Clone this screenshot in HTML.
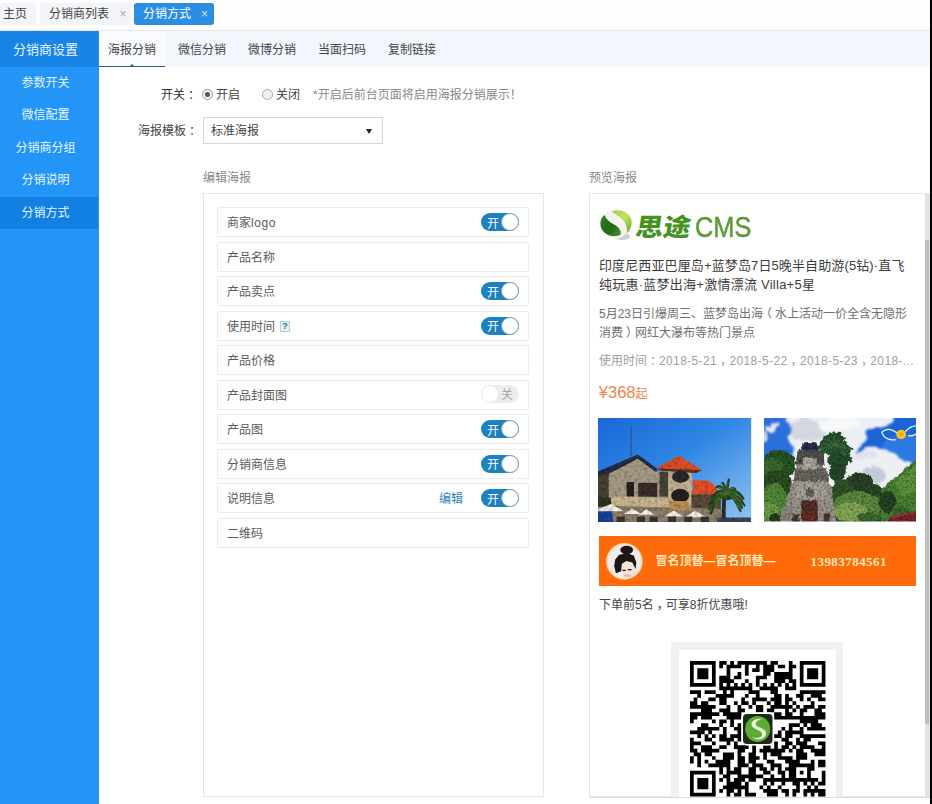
<!DOCTYPE html><html lang="zh-CN"><head><meta charset="utf-8"><title>分销方式</title><style>
*{margin:0;padding:0;box-sizing:border-box}
html,body{width:932px;height:804px;overflow:hidden;background:#fff}
body{font-family:"Liberation Sans","Noto Sans CJK SC",sans-serif;font-size:12px;color:#444;position:relative}
.a{position:absolute;white-space:nowrap}
.p{position:relative;left:3px}
.pl{position:relative;left:-3px}
.bd{font-family:'Liberation Sans','Noto Sans CJK SC',sans-serif;font-weight:bold}
.bk{font-family:'Liberation Sans','Noto Sans CJK SC',sans-serif;font-weight:900}
.t{position:absolute;white-space:nowrap;line-height:20px;height:20px}
#topbar{left:0;top:0;width:930px;height:30px;background:#fdfdfe}
#topline{left:0;top:30px;width:930px;height:1px;background:#e3e6ec}
.tab{top:3px;height:22px;line-height:22px;border-radius:3px;background:#f3f4f8;color:#444;font-size:12px}
.tab.on{background:#2b8ee3;color:#fff}
.tab i{font-style:normal;position:absolute;top:0;color:#aaa;font-size:12px}
.tab.on i{color:#cfe6fb}
#side{left:0;top:31px;width:99px;height:773px;background:#2395f6;border-right:1px solid #3d8fd6}
#side .hd{left:0;top:0;width:98px;padding-left:1px;height:35.5px;background:#1884e6;color:#e6f5ff;font-size:13px;line-height:37px;text-align:center;padding-right:8px}
#side .it{left:0;width:98px;padding-left:1px;height:32.5px;line-height:33px;color:#e6f5ff;text-align:center;font-size:12px;padding-right:8px}
#side .it.on{background:#1180e2}
#sub{left:99px;top:31px;width:831px;height:36px;background:#f2f6fd}
#sub .s{top:0;height:36px;line-height:38px;font-size:12px;color:#444}
#sub .s.on{background:#f9fbff;border-bottom:1px solid #2b5f80}
.rail{left:930.2px;top:0;width:2px;height:804px;background:#000}
.panel{border:1px solid #e6e6e6;background:#fff}
.row{left:217px;width:312px;height:30px;border:1px solid #ebebef;border-radius:2px;background:#fff}
.row .l{left:9px;top:5px;line-height:20px;color:#5a5a5a;font-size:12px}
.tg{left:263px;top:5px;width:38px;height:18px;border-radius:9px;background:#1c82bf}
.tg b{position:absolute;left:6px;top:0.5px;line-height:20px;font-weight:normal;color:#fff;font-size:12px}
.tg u{position:absolute;right:0;top:0;width:18px;height:18px;border-radius:9px;background:#fff;border:1px solid #8aa;}
.tg.off{background:#ececec;top:4px}
.tg.off b{left:auto;right:6px;color:#aaa}
.tg.off u{right:auto;left:0;border-color:#e8e8e8}
</style></head><body>
<div class="a" id="topbar"></div><div class="a" id="topline"></div>
<div class="a tab" style="left:0;width:36px;padding-left:3px">主页</div>
<div class="a tab" style="left:40px;width:91px;padding-left:9px">分销商列表<i style="left:79.5px">×</i></div>
<div class="a tab on" style="left:134px;width:80px;padding-left:9px">分销方式<i style="left:67px">×</i></div>
<div class="a" id="side"><div class="a hd">分销商设置</div>
<div class="a it" style="top:35.6px">参数开关</div>
<div class="a it" style="top:68.1px">微信配置</div>
<div class="a it" style="top:100.6px">分销商分组</div>
<div class="a it" style="top:133.1px">分销说明</div>
<div class="a it on" style="top:165.6px">分销方式</div>
</div>
<div class="a" id="sub">
<div class="a s on" style="left:0;width:66px;text-align:center">海报分销<span class="a" style="left:29.5px;top:32.5px;width:0;height:0;border-left:3px solid transparent;border-right:3px solid transparent;border-bottom:3px solid #2b5f80"></span></div>
<div class="a s" style="left:79px">微信分销</div>
<div class="a s" style="left:149px">微博分销</div>
<div class="a s" style="left:219px">当面扫码</div>
<div class="a s" style="left:289px">复制链接</div>
</div>
<div class="t" style="left:161px;top:85px;color:#333">开关<span class="p">：</span></div>
<div class="a" style="left:202px;top:89px;width:11px;height:11px;border-radius:50%;border:1px solid #999;background:#f4f4f4"><span class="a" style="left:2px;top:2px;width:5px;height:5px;border-radius:50%;background:#555"></span></div>
<div class="t" style="left:216px;top:85px">开启</div>
<div class="a" style="left:262px;top:89px;width:11px;height:11px;border-radius:50%;border:1px solid #aaa;background:#f0f0f0"></div>
<div class="t" style="left:276px;top:85px">关闭</div>
<div class="t" style="left:313px;top:85px;color:#888">*开启后前台页面将启用海报分销展示！</div>
<div class="t" style="left:138px;top:121px">海报模板<span class="p">：</span></div>
<div class="a" style="left:203px;top:117px;width:180px;height:27px;border:1px solid #d5d5d5;background:#fff"><span class="t" style="left:7px;top:3px">标准海报</span><span class="a" style="left:162px;top:11px;width:0;height:0;border-left:3px solid transparent;border-right:3px solid transparent;border-top:5px solid #222"></span></div>
<div class="t" style="left:203px;top:168px;color:#888">编辑海报</div>
<div class="a panel" style="left:203px;top:193px;width:341px;height:604px"></div>
<div class="a row" style="top:207.4px"><span class="a l">商家<span style="letter-spacing:0.6px">logo</span></span><span class="a tg"><b>开</b><u></u></span></div>
<div class="a row" style="top:241.9px"><span class="a l">产品名称</span></div>
<div class="a row" style="top:276.4px"><span class="a l">产品卖点</span><span class="a tg"><b>开</b><u></u></span></div>
<div class="a row" style="top:310.9px"><span class="a l">使用时间</span><span class="a" style="left:62px;top:9px;width:10px;height:11px;border:1px solid #b5cfdc;background:#e6f1f6;font-size:9px;line-height:9px;text-align:center;color:#2f6f8f;font-weight:bold">?</span><span class="a tg"><b>开</b><u></u></span></div>
<div class="a row" style="top:345.4px"><span class="a l">产品价格</span></div>
<div class="a row" style="top:379.9px"><span class="a l">产品封面图</span><span class="a tg off"><b>关</b><u></u></span></div>
<div class="a row" style="top:414.4px"><span class="a l">产品图</span><span class="a tg"><b>开</b><u></u></span></div>
<div class="a row" style="top:448.9px"><span class="a l">分销商信息</span><span class="a tg"><b>开</b><u></u></span></div>
<div class="a row" style="top:483.4px"><span class="a l">说明信息</span><span class="a" style="left:221px;top:5px;line-height:20px;color:#2a7fb8">编辑</span><span class="a tg"><b>开</b><u></u></span></div>
<div class="a row" style="top:517.9px"><span class="a l">二维码</span></div>
<div class="t" style="left:589px;top:168px;color:#888">预览海报</div>
<div class="a panel" style="left:589px;top:193px;width:341px;height:604px;overflow:hidden" id="pv"></div>
<svg class="a" style="left:597px;top:207px" width="38" height="38" viewBox="0 0 38 38"><defs><linearGradient id="lg1" x1="0" y1="0" x2="1" y2="1"><stop offset="0" stop-color="#2f7f22"/><stop offset="0.6" stop-color="#1f6a1a"/><stop offset="1" stop-color="#4d9a30"/></linearGradient><linearGradient id="lg2" x1="0" y1="0" x2="1" y2="1"><stop offset="0" stop-color="#a9d24a"/><stop offset="0.5" stop-color="#c4e060"/><stop offset="1" stop-color="#5da02c"/></linearGradient><filter id="lb" x="-20%" y="-20%" width="140%" height="140%"><feGaussianBlur stdDeviation="0.55"/></filter></defs><g filter="url(#lb)"><ellipse cx="25" cy="29.5" rx="8" ry="3.6" fill="#cfcfcf"/><path d="M6 9 C9 4 17 2 23 5 C29 8 33 14 31 22 C29 29 22 33 16 31 C9 29 3 22 4 15 C4.3 12.5 5 10.5 6 9z" fill="#f3f4f1"/><path d="M7.5 8 C2 12 1.8 21 8 26 C12.5 29.5 19 30 23.5 28 C25 24.5 22 20 17 17.5 C12 15 9 12 7.5 8z" fill="url(#lg1)"/><path d="M14.5 4.6 C20 2 28 3 32 8 C36 13 35.5 21 30 26.5 C30.5 20 28.5 15 24.5 11.5 C21.5 9 18 7 14.5 4.6z" fill="url(#lg2)"/></g></svg>
<div class="a bk" style="left:632.6px;top:206px;height:40px;line-height:40px;font-size:27.5px;color:#45931f;transform:skewX(-9deg) scaleY(0.9);transform-origin:0 100%" id="lt1">思途</div>
<div class="a" style="left:694.5px;top:206.5px;height:40px;line-height:40px;font-size:30px;color:#5b9a3a;-webkit-text-stroke:0.5px #5b9a3a;transform:scaleX(0.845);transform-origin:0 50%" id="lt2">CMS</div>
<div class="t" style="left:599px;top:255.6px;font-size:13px;color:#3c3c3c;letter-spacing:0.12px" id="t1">印度尼西亚巴厘岛+蓝梦岛7日5晚半自助游(5钻)·直飞</div>
<div class="t" style="left:599px;top:275px;font-size:13px;color:#3c3c3c;letter-spacing:0.25px" id="t2">纯玩惠·蓝梦出海+激情漂流 Villa+5星</div>
<div class="t" style="left:599px;top:304px;color:#707070" id="t3">5月23日引爆周三、蓝梦岛出海<span class="pl">（</span>水上活动一价全含无隐形</div>
<div class="t" style="left:599px;top:323px;color:#707070" id="t4">消费<span class="p">）</span>网红大瀑布等热门景点</div>
<div class="t" style="left:599px;top:351px;color:#a0a0a0" id="t5">使用时间<span class="p">：</span><span style="letter-spacing:0.37px">2018-5-21<span class="p">，</span>2018-5-22<span class="p">，</span>2018-5-23<span class="p">，</span>2018-...</span></div>
<div class="t" style="left:598.8px;top:381.5px;color:#f2814c;font-size:16.5px" id="t6">¥368<span style="font-size:12px">起</span></div>
<svg class="a" style="left:598.4px;top:418px" width="153.2" height="103.6" viewBox="0 0 153 103.5" preserveAspectRatio="none"><defs><linearGradient id="sk1" x1="0" y1="0" x2="1" y2="1"><stop offset="0" stop-color="#1868d6"/><stop offset="0.45" stop-color="#2f86e4"/><stop offset="1" stop-color="#92c4f0"/></linearGradient><filter id="b1" filterUnits="userSpaceOnUse" x="-10" y="-10" width="173" height="124"><feTurbulence type="fractalNoise" baseFrequency="0.3" numOctaves="2" seed="5" result="n"/><feDisplacementMap in="SourceGraphic" in2="n" scale="1.6" xChannelSelector="R" yChannelSelector="G" result="d"/><feGaussianBlur in="d" stdDeviation="0.45" result="bl"/><feColorMatrix in="n" type="matrix" values="0 0 0 0 0  0 0 0 0 0  0 0 0 0 0  1.2 0 0 0 -0.5" result="m"/><feComposite in="m" in2="bl" operator="in" result="sh"/><feMerge><feMergeNode in="bl"/><feMergeNode in="sh"/></feMerge></filter></defs><rect width="153" height="103.5" fill="url(#sk1)"/><g filter="url(#b1)"><polygon points="32.5,9.1 33.9,9.1 33.6,38.3 32.1,38.3" fill="#3b5f9a"/><polygon points="-5.1,72.1 122.6,72.1 122.6,110.4 -5.1,110.4" fill="#7f7562"/><polygon points="-5.1,68.4 11.3,71.2 14.1,90.3 -5.1,90.3" fill="#2f3522"/><polygon points="-5.1,55.7 39.6,36.5 58.8,50.5 58.8,79.4 -5.1,79.4" fill="#2b2e42"/><polygon points="10.4,56.0 39.6,40.7 56.9,53.5 69.7,53.5 69.7,79.4 10.4,79.4" fill="#a59b86"/><polygon points="-5.1,59.7 10.4,55.7 10.4,79.4 -5.1,79.4" fill="#4a4236"/><polygon points="28.6,63.9 35.9,63.9 35.9,78.6 28.6,78.6" fill="#2a2420"/><polygon points="40.1,64.8 59.1,64.8 59.1,78.6 40.1,78.6" fill="#3a2f2a"/><polygon points="61.5,53.8 70.1,53.8 70.1,78.6 61.5,78.6" fill="#4a4238"/><polygon points="70.1,52.0 93.8,52.0 93.8,90.3 70.1,90.3" fill="#c3b190"/><polygon points="57.8,50.5 80.7,37.8 104.0,52.0 98.0,54.9 64.2,52.4" fill="#d9502a"/><polygon points="57.8,50.5 104.0,52.0 98.0,54.9 64.2,52.7" fill="#5a3426"/><ellipse cx="82.5" cy="58.6" rx="8.5" ry="6" fill="#2c2a2e"/><ellipse cx="82.1" cy="77.6" rx="9" ry="7" fill="#2a2422"/><polygon points="94.9,62.0 110.8,62.6 119.0,70.3 117.2,76.1 94.9,76.1" fill="#e2502a"/><polygon points="93.4,76.1 122.6,76.1 122.6,110.4 93.4,110.4" fill="#5b4a3a"/><polygon points="13.1,78.3 70.1,79.7 70.1,89.4 13.1,87.6" fill="#c8b690"/><polygon points="-5.1,88.5 122.6,90.3 122.6,110.4 -5.1,110.4" fill="#8d806c"/><polygon points="71.5,83.0 89.8,83.0 93.4,92.2 71.5,92.2" fill="#b98f52"/><polygon points="124.1,79.4 127.7,79.4 127.2,110.4 123.0,110.4" fill="#2e2a26"/><ellipse cx="128.5" cy="76.1" rx="9" ry="6" fill="#2a4a22"/><path d="M128.5 76.1Q119.7 78.0 112.6 95.4M128.5 76.1Q118.9 74.3 111.1 91.3M128.5 76.1Q118.9 71.5 111.1 86.7M128.5 76.1Q120.4 69.1 113.8 79.5M128.5 76.1Q123.1 65.7 118.8 68.9M128.5 76.1Q126.2 66.1 124.3 64.9M128.5 76.1Q129.7 64.4 130.7 61.6M128.5 76.1Q133.2 67.9 137.0 71.2M128.5 76.1Q137.7 68.5 145.2 80.7M128.5 76.1Q138.1 71.7 146.0 87.3M128.5 76.1Q136.9 74.6 143.7 89.6M128.5 76.1Q136.0 77.7 142.2 92.8" fill="none" stroke="#2b4a22" stroke-width="2.4" stroke-linecap="round"/><path d="M128.5 76.1Q121.9 77.5 116.5 89.5M128.5 76.1Q122.0 74.3 116.8 84.2M128.5 76.1Q122.3 71.8 117.3 79.4M128.5 76.1Q124.5 68.5 121.2 70.4M128.5 76.1Q128.7 67.9 128.9 65.5M128.5 76.1Q132.2 68.7 135.2 70.3M128.5 76.1Q134.2 71.0 138.9 77.4M128.5 76.1Q136.3 73.7 142.8 85.7M128.5 76.1Q135.6 77.1 141.4 89.8" fill="none" stroke="#47702e" stroke-width="1.2" stroke-linecap="round"/><polygon points="119.0,99.5 152.7,99.5 152.7,110.4 119.0,110.4" fill="#3d4655"/><polygon points="-5.1,93.2 12.8,85.8 25.9,93.2" fill="#f3efe6"/><polygon points="25.9,95.8 34.1,90.3 43.2,95.8" fill="#f3efe6"/><polygon points="40.5,96.7 48.2,91.2 56.9,96.7" fill="#f3efe6"/><polygon points="66.1,98.5 75.5,92.5 86.1,98.5" fill="#f3efe6"/><polygon points="87.0,99.1 97.1,92.5 108.0,99.1" fill="#f3efe6"/><polygon points="-5.1,93.6 14.1,93.2 15.9,110.4 -5.1,110.4" fill="#1c3f9c"/><polygon points="18.6,98.5 26.8,98.5 26.8,110.4 18.6,110.4" fill="#3a3430"/><polygon points="38.7,98.5 46.9,98.5 46.9,110.4 38.7,110.4" fill="#3a3430"/><polygon points="51.5,98.5 59.7,98.5 59.7,110.4 51.5,110.4" fill="#3a3430"/><polygon points="69.7,98.5 77.9,98.5 77.9,110.4 69.7,110.4" fill="#3a3430"/><polygon points="86.1,98.5 94.3,98.5 94.3,110.4 86.1,110.4" fill="#3a3430"/><polygon points="102.6,98.5 110.8,98.5 110.8,110.4 102.6,110.4" fill="#3a3430"/></g></svg>
<svg class="a" style="left:763.6px;top:418px" width="152.6" height="103.6" viewBox="0 0 152.6 103.5" preserveAspectRatio="none"><defs><filter id="b2" filterUnits="userSpaceOnUse" x="-10" y="-10" width="173" height="124"><feTurbulence type="fractalNoise" baseFrequency="0.06" numOctaves="3" seed="2" result="n"/><feDisplacementMap in="SourceGraphic" in2="n" scale="14" xChannelSelector="R" yChannelSelector="G" result="d"/><feGaussianBlur in="d" stdDeviation="1.2"/></filter><filter id="b3" filterUnits="userSpaceOnUse" x="-10" y="-10" width="173" height="124"><feTurbulence type="fractalNoise" baseFrequency="0.18" numOctaves="3" seed="4" result="n"/><feDisplacementMap in="SourceGraphic" in2="n" scale="4.5" xChannelSelector="R" yChannelSelector="G" result="d"/><feGaussianBlur in="d" stdDeviation="0.5" result="bl"/><feTurbulence type="fractalNoise" baseFrequency="0.45" numOctaves="2" seed="9" result="n2"/><feColorMatrix in="n2" type="matrix" values="0 0 0 0 0  0 0 0 0 0  0 0 0 0 0  1.6 0 0 0 -0.62" result="m"/><feComposite in="m" in2="bl" operator="in" result="sh"/><feMerge><feMergeNode in="bl"/><feMergeNode in="sh"/></feMerge></filter><clipPath id="c2"><rect width="152.6" height="103.5"/></clipPath></defs><g clip-path="url(#c2)"><rect width="152.6" height="103.5" fill="#eceff4"/><g filter="url(#b2)"><ellipse cx="42.3" cy="11.9" rx="21.9" ry="10.9" fill="#d3d7e0"/><ellipse cx="77.0" cy="4.6" rx="21.9" ry="7.3" fill="#f7f8fa"/><ellipse cx="109.9" cy="57.5" rx="12.8" ry="8.2" fill="#c3c9d6"/><ellipse cx="100.7" cy="37.4" rx="10.9" ry="5.5" fill="#dfe3ea"/><polygon points="-8.8,-8.2 23.2,-8.2 24.5,10.0 25.9,21.0 32.3,31.0 18.6,37.4 -8.8,48.4" fill="#2a70dc"/><polygon points="88.9,32.8 100.7,19.2 115.3,9.1 127.2,0.0 135.4,-8.2 162.8,-8.2 162.8,46.5 148.2,45.1 137.2,43.2 126.3,33.4 111.7,27.4 100.7,31.6" fill="#1c63d6"/><polygon points="119.0,28.3 133.6,17.3 166.4,19.2 166.4,46.5 139.1,43.8 127.2,33.8" fill="#2f78e2"/><ellipse cx="6.8" cy="8.6" rx="5.5" ry="3.3" fill="#e9eef8"/><ellipse cx="2.2" cy="19.2" rx="2.9" ry="5.5" fill="#dfe8f7"/></g><g filter="url(#b3)"><polygon points="-8.8,77.6 27.7,70.3 75.2,68.4 119.0,72.1 166.4,64.8 166.4,114.1 -8.8,114.1" fill="#3a6230"/><ellipse cx="15.0" cy="46.5" rx="16.8" ry="14.6" fill="#2c5629"/><ellipse cx="8.6" cy="52.0" rx="10.9" ry="12.8" fill="#3c6c30"/><ellipse cx="13.1" cy="64.8" rx="14.6" ry="12.8" fill="#2f5026"/><ellipse cx="10.4" cy="84.9" rx="13.7" ry="20.1" fill="#55893a"/><ellipse cx="5.8" cy="94.0" rx="9.1" ry="10.9" fill="#6f9f46"/><ellipse cx="10.4" cy="99.5" rx="5.5" ry="4.6" fill="#2c3f24"/><polygon points="70.1,33.8 72.6,33.8 73.4,68.4 70.8,68.4" fill="#3a4a38"/><ellipse cx="70.1" cy="26.5" rx="11.3" ry="11.3" fill="#2d5a33"/><ellipse cx="74.3" cy="42.9" rx="10.0" ry="10.9" fill="#2a4f2e"/><path d="M70.1 28.3Q61.6 30.5 54.6 42.5M70.1 28.3Q60.3 27.9 52.4 39.9M70.1 28.3Q61.6 25.4 54.7 34.3M70.1 28.3Q60.1 22.9 51.9 32.2M70.1 28.3Q63.0 21.4 57.2 26.1M70.1 28.3Q65.4 18.6 61.7 19.0M70.1 28.3Q67.8 17.8 66.0 15.7M70.1 28.3Q70.3 18.5 70.4 15.6M70.1 28.3Q73.3 16.9 76.0 15.2M70.1 28.3Q75.8 18.3 80.4 19.7M70.1 28.3Q76.8 21.7 82.2 26.0M70.1 28.3Q79.3 23.0 86.9 31.3M70.1 28.3Q78.4 25.4 85.3 34.1M70.1 28.3Q79.4 28.2 87.0 39.9M70.1 28.3Q79.4 30.6 87.0 43.7" fill="none" stroke="#2a5230" stroke-width="2.8" stroke-linecap="round"/><path d="M70.1 28.3Q63.2 29.6 57.7 37.8M70.1 28.3Q62.1 25.9 55.6 33.0M70.1 28.3Q63.5 22.6 58.1 26.3M70.1 28.3Q66.2 21.5 63.0 21.8M70.1 28.3Q70.6 20.0 71.0 17.6M70.1 28.3Q73.5 22.1 76.4 22.4M70.1 28.3Q75.7 23.7 80.3 27.0M70.1 28.3Q77.3 26.5 83.3 33.2M70.1 28.3Q76.1 29.1 81.1 36.2" fill="none" stroke="#3f7040" stroke-width="1.6" stroke-linecap="round"/><ellipse cx="73.4" cy="55.7" rx="8.2" ry="7.3" fill="#2b4a2e"/><ellipse cx="95.3" cy="63.9" rx="13.7" ry="9.1" fill="#29442a"/><ellipse cx="108.0" cy="72.1" rx="10.9" ry="6.4" fill="#2d4a2c"/><ellipse cx="78.8" cy="72.1" rx="10.9" ry="10.9" fill="#35552f"/><ellipse cx="93.4" cy="88.5" rx="23.7" ry="15.5" fill="#5e8c40"/><ellipse cx="86.1" cy="94.0" rx="16.4" ry="10.0" fill="#86ab5a"/><ellipse cx="104.4" cy="99.5" rx="10.9" ry="5.5" fill="#3f6a30"/><polygon points="117.2,71.2 152.7,40.7 166.4,40.7 166.4,114.1 117.2,114.1" fill="#4c8235"/><polygon points="129.9,64.8 152.7,46.5 166.4,46.5 166.4,68.4 137.2,79.4" fill="#5f9740"/><ellipse cx="123.5" cy="83.9" rx="8.8" ry="10.9" fill="#2a4526"/><ellipse cx="137.2" cy="94.0" rx="9.1" ry="5.5" fill="#3d6a2e"/><polygon points="43.2,24.3 48.2,24.3 51.5,34.1 59.1,45.1 63.5,61.5 68.2,72.4 72.4,114.1 16.8,114.1 24.5,72.4 30.3,61.5 33.9,45.1 39.1,34.1" fill="#9c968f"/><polygon points="39.1,24.3 50.7,24.3 54.2,32.8 36.5,32.8" fill="#2b3350"/><polygon points="33.6,32.8 57.3,32.8 60.9,46.5 31.8,46.5" fill="#55524e"/><polygon points="30.5,50.2 62.8,50.2 65.1,63.0 28.6,63.0" fill="#6d6862"/><polygon points="39.1,39.6 52.4,39.6 53.3,52.0 38.3,52.0" fill="#b1aba3"/><polygon points="32.3,64.8 61.5,64.8 63.3,81.2 30.5,81.2" fill="#aaa49c"/><ellipse cx="45.6" cy="74.8" rx="4.0" ry="4.7" fill="#6c6660"/><polygon points="37.2,82.1 53.6,82.1 53.6,114.1 37.2,114.1" fill="#54302a"/><polygon points="39.1,94.0 51.8,94.0 51.8,114.1 39.1,114.1" fill="#6a3029"/><polygon points="28.6,95.4 34.5,95.4 34.5,114.1 28.6,114.1" fill="#4a3b36"/><polygon points="59.7,95.4 66.1,95.4 66.1,114.1 59.7,114.1" fill="#4a3b36"/><polygon points="16.8,90.3 27.7,86.7 28.6,114.1 16.8,114.1" fill="#8d8a84"/><polygon points="124.5,98.5 153.6,93.1 166.4,93.1 166.4,114.1 127.2,114.1" fill="#7a2a2e"/><polygon points="124.5,98.5 153.6,93.1 153.6,94.9 125.5,100.5" fill="#9a4040"/></g><path d="M133.2 15.1 q-9 -7 -15.5 -1 q3 9 14 7.5 M141.2 13.7 q7 -8 15 -5 q-2 10 -12 9" fill="none" stroke="#e8f6ff" stroke-width="1.3"/><ellipse cx="137.2" cy="16.4" rx="4.9" ry="4.6" fill="#f4c31c"/><ellipse cx="137.2" cy="16.4" rx="1.8" ry="1.6" fill="#e89a10"/></g></svg>
<div class="a" style="left:599px;top:536.3px;width:317px;height:49.4px;background:#ff6a0a"></div>
<svg class="a" style="left:605.5px;top:542.5px" width="37" height="37" viewBox="0 0 37 37"><defs><clipPath id="av"><circle cx="18.4" cy="18.4" r="16.8"/></clipPath><filter id="ab" x="-20%" y="-20%" width="140%" height="140%"><feGaussianBlur stdDeviation="0.6"/></filter></defs><circle cx="18.4" cy="18.4" r="18.3" fill="#ffd5ae"/><circle cx="18.4" cy="18.4" r="16.8" fill="#efebeb"/><g clip-path="url(#av)"><g filter="url(#ab)"><ellipse cx="22.6" cy="26.5" rx="7.2" ry="8.6" fill="#f1e2da"/><ellipse cx="20.7" cy="7" rx="6.4" ry="4.2" fill="#1d1516"/><polygon points="12.9,11.9 20.4,10 27.8,12.6 30.3,19.4 29.6,26 26.3,19.4 20.4,17.9 15.9,20.8 15.1,28.3 9.9,30.2 8.2,23.1 9.2,16.4" fill="#1f1617"/><path d="M16.4 27.3h3.4M21.8 26.6h3.8" stroke="#2a1c1c" stroke-width="1.2"/><ellipse cx="21.5" cy="32.5" rx="4" ry="1.2" fill="#d9bfb6"/></g></g></svg>
<div class="t bd" style="left:655.5px;top:551px;color:#ffe9b8" id="t7">冒名顶替—冒名顶替—</div>
<div class="t" style="left:810.5px;top:551.5px;color:#ffe9b8;font-weight:bold;font-family:'Liberation Serif',serif;font-size:13px;letter-spacing:0.45px" id="t8">13983784561</div>
<div class="t" style="left:599px;top:595px;color:#444" id="t9">下单前5名<span class="p">，</span>可享8折优惠哦!</div>
<div class="a" style="left:671px;top:641.5px;width:172px;height:156px;background:#f1f1f2"></div>
<div class="a" style="left:679px;top:649.5px;width:157px;height:148px;background:#fff"></div>
<svg class="a" style="left:689.6px;top:660.8px" width="136" height="136" viewBox="0 0 136 136"><path d="M0.00 0.00h25.67v3.71h-25.67zM29.28 0.00h7.37v3.71h-7.37zM40.26 0.00h3.71v3.71h-3.71zM47.58 0.00h29.33v3.71h-29.33zM80.52 0.00h7.37v3.71h-7.37zM98.82 0.00h3.71v3.71h-3.71zM109.80 0.00h25.67v3.71h-25.67zM0.00 3.66h3.71v3.71h-3.71zM21.96 3.66h3.71v3.71h-3.71zM29.28 3.66h3.71v3.71h-3.71zM36.60 3.66h14.69v3.71h-14.69zM54.90 3.66h3.71v3.71h-3.71zM65.88 3.66h3.71v3.71h-3.71zM73.20 3.66h11.03v3.71h-11.03zM87.84 3.66h7.37v3.71h-7.37zM98.82 3.66h7.37v3.71h-7.37zM109.80 3.66h3.71v3.71h-3.71zM131.76 3.66h3.71v3.71h-3.71zM0.00 7.32h3.71v3.71h-3.71zM7.32 7.32h11.03v3.71h-11.03zM21.96 7.32h3.71v3.71h-3.71zM36.60 7.32h3.71v3.71h-3.71zM54.90 7.32h3.71v3.71h-3.71zM62.22 7.32h7.37v3.71h-7.37zM73.20 7.32h11.03v3.71h-11.03zM98.82 7.32h3.71v3.71h-3.71zM109.80 7.32h3.71v3.71h-3.71zM117.12 7.32h11.03v3.71h-11.03zM131.76 7.32h3.71v3.71h-3.71zM0.00 10.98h3.71v3.71h-3.71zM7.32 10.98h11.03v3.71h-11.03zM21.96 10.98h3.71v3.71h-3.71zM36.60 10.98h3.71v3.71h-3.71zM47.58 10.98h3.71v3.71h-3.71zM54.90 10.98h3.71v3.71h-3.71zM73.20 10.98h7.37v3.71h-7.37zM84.18 10.98h18.35v3.71h-18.35zM109.80 10.98h3.71v3.71h-3.71zM117.12 10.98h11.03v3.71h-11.03zM131.76 10.98h3.71v3.71h-3.71zM0.00 14.64h3.71v3.71h-3.71zM7.32 14.64h11.03v3.71h-11.03zM21.96 14.64h3.71v3.71h-3.71zM29.28 14.64h11.03v3.71h-11.03zM43.92 14.64h7.37v3.71h-7.37zM65.88 14.64h11.03v3.71h-11.03zM84.18 14.64h18.35v3.71h-18.35zM109.80 14.64h3.71v3.71h-3.71zM117.12 14.64h11.03v3.71h-11.03zM131.76 14.64h3.71v3.71h-3.71zM0.00 18.30h3.71v3.71h-3.71zM21.96 18.30h3.71v3.71h-3.71zM29.28 18.30h14.69v3.71h-14.69zM54.90 18.30h3.71v3.71h-3.71zM65.88 18.30h3.71v3.71h-3.71zM84.18 18.30h11.03v3.71h-11.03zM98.82 18.30h7.37v3.71h-7.37zM109.80 18.30h3.71v3.71h-3.71zM131.76 18.30h3.71v3.71h-3.71zM0.00 21.96h25.67v3.71h-25.67zM29.28 21.96h3.71v3.71h-3.71zM36.60 21.96h3.71v3.71h-3.71zM43.92 21.96h3.71v3.71h-3.71zM51.24 21.96h3.71v3.71h-3.71zM58.56 21.96h3.71v3.71h-3.71zM65.88 21.96h3.71v3.71h-3.71zM73.20 21.96h3.71v3.71h-3.71zM80.52 21.96h3.71v3.71h-3.71zM87.84 21.96h3.71v3.71h-3.71zM95.16 21.96h3.71v3.71h-3.71zM102.48 21.96h3.71v3.71h-3.71zM109.80 21.96h25.67v3.71h-25.67zM29.28 25.62h32.99v3.71h-32.99zM69.54 25.62h18.35v3.71h-18.35zM95.16 25.62h11.03v3.71h-11.03zM0.00 29.28h11.03v3.71h-11.03zM14.64 29.28h11.03v3.71h-11.03zM32.94 29.28h3.71v3.71h-3.71zM40.26 29.28h3.71v3.71h-3.71zM58.56 29.28h11.03v3.71h-11.03zM80.52 29.28h7.37v3.71h-7.37zM109.80 29.28h25.67v3.71h-25.67zM7.32 32.94h3.71v3.71h-3.71zM25.62 32.94h18.35v3.71h-18.35zM54.90 32.94h3.71v3.71h-3.71zM65.88 32.94h3.71v3.71h-3.71zM84.18 32.94h7.37v3.71h-7.37zM95.16 32.94h3.71v3.71h-3.71zM106.14 32.94h7.37v3.71h-7.37zM120.78 32.94h11.03v3.71h-11.03zM3.66 36.60h3.71v3.71h-3.71zM18.30 36.60h7.37v3.71h-7.37zM29.28 36.60h7.37v3.71h-7.37zM51.24 36.60h3.71v3.71h-3.71zM62.22 36.60h14.69v3.71h-14.69zM80.52 36.60h11.03v3.71h-11.03zM95.16 36.60h7.37v3.71h-7.37zM109.80 36.60h3.71v3.71h-3.71zM117.12 36.60h3.71v3.71h-3.71zM128.10 36.60h7.37v3.71h-7.37zM0.00 40.26h7.37v3.71h-7.37zM10.98 40.26h7.37v3.71h-7.37zM29.28 40.26h7.37v3.71h-7.37zM43.92 40.26h3.71v3.71h-3.71zM51.24 40.26h7.37v3.71h-7.37zM62.22 40.26h3.71v3.71h-3.71zM76.86 40.26h3.71v3.71h-3.71zM84.18 40.26h7.37v3.71h-7.37zM95.16 40.26h3.71v3.71h-3.71zM102.48 40.26h3.71v3.71h-3.71zM120.78 40.26h3.71v3.71h-3.71zM0.00 43.92h25.67v3.71h-25.67zM36.60 43.92h3.71v3.71h-3.71zM47.58 43.92h3.71v3.71h-3.71zM58.56 43.92h3.71v3.71h-3.71zM65.88 43.92h7.37v3.71h-7.37zM80.52 43.92h22.01v3.71h-22.01zM106.14 43.92h3.71v3.71h-3.71zM113.46 43.92h11.03v3.71h-11.03zM128.10 43.92h7.37v3.71h-7.37zM10.98 47.58h11.03v3.71h-11.03zM29.28 47.58h11.03v3.71h-11.03zM47.58 47.58h7.37v3.71h-7.37zM65.88 47.58h7.37v3.71h-7.37zM76.86 47.58h7.37v3.71h-7.37zM95.16 47.58h3.71v3.71h-3.71zM102.48 47.58h3.71v3.71h-3.71zM109.80 47.58h7.37v3.71h-7.37zM124.44 47.58h7.37v3.71h-7.37zM0.00 51.24h29.33v3.71h-29.33zM32.94 51.24h18.35v3.71h-18.35zM84.18 51.24h7.37v3.71h-7.37zM95.16 51.24h7.37v3.71h-7.37zM109.80 51.24h3.71v3.71h-3.71zM124.44 51.24h11.03v3.71h-11.03zM0.00 54.90h7.37v3.71h-7.37zM10.98 54.90h11.03v3.71h-11.03zM36.60 54.90h14.69v3.71h-14.69zM84.18 54.90h51.29v3.71h-51.29zM0.00 58.56h3.71v3.71h-3.71zM21.96 58.56h3.71v3.71h-3.71zM29.28 58.56h7.37v3.71h-7.37zM40.26 58.56h3.71v3.71h-3.71zM109.80 58.56h18.35v3.71h-18.35zM10.98 62.22h7.37v3.71h-7.37zM29.28 62.22h3.71v3.71h-3.71zM40.26 62.22h3.71v3.71h-3.71zM47.58 62.22h3.71v3.71h-3.71zM98.82 62.22h11.03v3.71h-11.03zM113.46 62.22h3.71v3.71h-3.71zM120.78 62.22h11.03v3.71h-11.03zM7.32 65.88h22.01v3.71h-22.01zM32.94 65.88h3.71v3.71h-3.71zM43.92 65.88h7.37v3.71h-7.37zM91.50 65.88h3.71v3.71h-3.71zM98.82 65.88h3.71v3.71h-3.71zM109.80 65.88h3.71v3.71h-3.71zM117.12 65.88h18.35v3.71h-18.35zM0.00 69.54h14.69v3.71h-14.69zM18.30 69.54h3.71v3.71h-3.71zM32.94 69.54h3.71v3.71h-3.71zM47.58 69.54h3.71v3.71h-3.71zM87.84 69.54h3.71v3.71h-3.71zM95.16 69.54h18.35v3.71h-18.35zM7.32 73.20h3.71v3.71h-3.71zM14.64 73.20h3.71v3.71h-3.71zM21.96 73.20h3.71v3.71h-3.71zM29.28 73.20h7.37v3.71h-7.37zM40.26 73.20h11.03v3.71h-11.03zM84.18 73.20h7.37v3.71h-7.37zM95.16 73.20h7.37v3.71h-7.37zM109.80 73.20h25.67v3.71h-25.67zM0.00 76.86h3.71v3.71h-3.71zM14.64 76.86h7.37v3.71h-7.37zM29.28 76.86h14.69v3.71h-14.69zM47.58 76.86h3.71v3.71h-3.71zM91.50 76.86h7.37v3.71h-7.37zM106.14 76.86h3.71v3.71h-3.71zM113.46 76.86h7.37v3.71h-7.37zM0.00 80.52h11.03v3.71h-11.03zM21.96 80.52h3.71v3.71h-3.71zM36.60 80.52h3.71v3.71h-3.71zM43.92 80.52h3.71v3.71h-3.71zM84.18 80.52h3.71v3.71h-3.71zM95.16 80.52h7.37v3.71h-7.37zM106.14 80.52h11.03v3.71h-11.03zM128.10 80.52h7.37v3.71h-7.37zM0.00 84.18h3.71v3.71h-3.71zM10.98 84.18h11.03v3.71h-11.03zM29.28 84.18h7.37v3.71h-7.37zM43.92 84.18h14.69v3.71h-14.69zM62.22 84.18h3.71v3.71h-3.71zM73.20 84.18h7.37v3.71h-7.37zM84.18 84.18h3.71v3.71h-3.71zM91.50 84.18h7.37v3.71h-7.37zM102.48 84.18h3.71v3.71h-3.71zM109.80 84.18h14.69v3.71h-14.69zM131.76 84.18h3.71v3.71h-3.71zM0.00 87.84h7.37v3.71h-7.37zM10.98 87.84h18.35v3.71h-18.35zM47.58 87.84h7.37v3.71h-7.37zM62.22 87.84h3.71v3.71h-3.71zM69.54 87.84h25.67v3.71h-25.67zM98.82 87.84h3.71v3.71h-3.71zM106.14 87.84h7.37v3.71h-7.37zM120.78 87.84h14.69v3.71h-14.69zM3.66 91.50h7.37v3.71h-7.37zM14.64 91.50h7.37v3.71h-7.37zM32.94 91.50h11.03v3.71h-11.03zM47.58 91.50h3.71v3.71h-3.71zM58.56 91.50h7.37v3.71h-7.37zM73.20 91.50h3.71v3.71h-3.71zM80.52 91.50h11.03v3.71h-11.03zM106.14 91.50h11.03v3.71h-11.03zM124.44 91.50h11.03v3.71h-11.03zM0.00 95.16h3.71v3.71h-3.71zM7.32 95.16h3.71v3.71h-3.71zM21.96 95.16h3.71v3.71h-3.71zM32.94 95.16h11.03v3.71h-11.03zM47.58 95.16h7.37v3.71h-7.37zM58.56 95.16h11.03v3.71h-11.03zM73.20 95.16h3.71v3.71h-3.71zM87.84 95.16h14.69v3.71h-14.69zM106.14 95.16h11.03v3.71h-11.03zM0.00 98.82h3.71v3.71h-3.71zM7.32 98.82h3.71v3.71h-3.71zM14.64 98.82h3.71v3.71h-3.71zM25.62 98.82h14.69v3.71h-14.69zM47.58 98.82h7.37v3.71h-7.37zM58.56 98.82h7.37v3.71h-7.37zM76.86 98.82h7.37v3.71h-7.37zM95.16 98.82h14.69v3.71h-14.69zM120.78 98.82h3.71v3.71h-3.71zM128.10 98.82h7.37v3.71h-7.37zM7.32 102.48h3.71v3.71h-3.71zM18.30 102.48h22.01v3.71h-22.01zM47.58 102.48h11.03v3.71h-11.03zM62.22 102.48h11.03v3.71h-11.03zM80.52 102.48h11.03v3.71h-11.03zM98.82 102.48h25.67v3.71h-25.67zM128.10 102.48h7.37v3.71h-7.37zM29.28 106.14h3.71v3.71h-3.71zM36.60 106.14h3.71v3.71h-3.71zM43.92 106.14h7.37v3.71h-7.37zM58.56 106.14h7.37v3.71h-7.37zM69.54 106.14h7.37v3.71h-7.37zM80.52 106.14h3.71v3.71h-3.71zM87.84 106.14h3.71v3.71h-3.71zM95.16 106.14h11.03v3.71h-11.03zM117.12 106.14h7.37v3.71h-7.37zM0.00 109.80h25.67v3.71h-25.67zM29.28 109.80h3.71v3.71h-3.71zM36.60 109.80h14.69v3.71h-14.69zM58.56 109.80h7.37v3.71h-7.37zM73.20 109.80h7.37v3.71h-7.37zM87.84 109.80h7.37v3.71h-7.37zM98.82 109.80h7.37v3.71h-7.37zM109.80 109.80h3.71v3.71h-3.71zM117.12 109.80h3.71v3.71h-3.71zM131.76 109.80h3.71v3.71h-3.71zM0.00 113.46h3.71v3.71h-3.71zM21.96 113.46h3.71v3.71h-3.71zM32.94 113.46h7.37v3.71h-7.37zM47.58 113.46h25.67v3.71h-25.67zM80.52 113.46h3.71v3.71h-3.71zM91.50 113.46h3.71v3.71h-3.71zM98.82 113.46h7.37v3.71h-7.37zM117.12 113.46h3.71v3.71h-3.71zM131.76 113.46h3.71v3.71h-3.71zM0.00 117.12h3.71v3.71h-3.71zM7.32 117.12h11.03v3.71h-11.03zM21.96 117.12h3.71v3.71h-3.71zM29.28 117.12h3.71v3.71h-3.71zM36.60 117.12h3.71v3.71h-3.71zM43.92 117.12h11.03v3.71h-11.03zM58.56 117.12h7.37v3.71h-7.37zM73.20 117.12h54.95v3.71h-54.95zM131.76 117.12h3.71v3.71h-3.71zM0.00 120.78h3.71v3.71h-3.71zM7.32 120.78h11.03v3.71h-11.03zM21.96 120.78h3.71v3.71h-3.71zM36.60 120.78h14.69v3.71h-14.69zM54.90 120.78h3.71v3.71h-3.71zM73.20 120.78h3.71v3.71h-3.71zM80.52 120.78h3.71v3.71h-3.71zM91.50 120.78h3.71v3.71h-3.71zM102.48 120.78h7.37v3.71h-7.37zM113.46 120.78h3.71v3.71h-3.71zM120.78 120.78h3.71v3.71h-3.71zM128.10 120.78h7.37v3.71h-7.37zM0.00 124.44h3.71v3.71h-3.71zM7.32 124.44h11.03v3.71h-11.03zM21.96 124.44h3.71v3.71h-3.71zM32.94 124.44h25.67v3.71h-25.67zM69.54 124.44h3.71v3.71h-3.71zM76.86 124.44h3.71v3.71h-3.71zM87.84 124.44h3.71v3.71h-3.71zM106.14 124.44h3.71v3.71h-3.71zM117.12 124.44h3.71v3.71h-3.71zM124.44 124.44h3.71v3.71h-3.71zM0.00 128.10h3.71v3.71h-3.71zM21.96 128.10h3.71v3.71h-3.71zM29.28 128.10h3.71v3.71h-3.71zM36.60 128.10h7.37v3.71h-7.37zM47.58 128.10h3.71v3.71h-3.71zM54.90 128.10h3.71v3.71h-3.71zM73.20 128.10h14.69v3.71h-14.69zM91.50 128.10h7.37v3.71h-7.37zM102.48 128.10h7.37v3.71h-7.37zM113.46 128.10h22.01v3.71h-22.01zM0.00 131.76h25.67v3.71h-25.67zM36.60 131.76h3.71v3.71h-3.71zM43.92 131.76h7.37v3.71h-7.37zM54.90 131.76h11.03v3.71h-11.03zM76.86 131.76h11.03v3.71h-11.03zM95.16 131.76h3.71v3.71h-3.71zM102.48 131.76h3.71v3.71h-3.71zM113.46 131.76h3.71v3.71h-3.71zM120.78 131.76h3.71v3.71h-3.71zM128.10 131.76h7.37v3.71h-7.37z" fill="#000"/><rect x="51.5" y="51.5" width="32.5" height="33" rx="5" fill="#fff"/><rect x="53" y="53" width="29.5" height="30" rx="4" fill="#1d2a1a"/><ellipse cx="67.7" cy="68" rx="12.5" ry="13" fill="#5faa35"/><path d="M72 58c-7-1-12 3-10 7 2 4 11 4 10 9-1 3-6 4-10 2 4 4 13 3 14-3 1-6-9-6-10-9-1-3 2-5 6-6z" fill="#e8f3dc"/></svg>
<div class="a" style="left:589px;top:796.5px;width:341px;height:7.5px;background:#fff;border-top:1px solid #ddd"></div>
<div class="a" style="left:924.8px;top:194px;width:4.5px;height:603px;background:#e2e2e2"></div>
<div class="a" style="left:924.8px;top:240px;width:4.5px;height:484px;background:#bdbdbd"></div>
<div class="a rail"></div>
</body></html>
